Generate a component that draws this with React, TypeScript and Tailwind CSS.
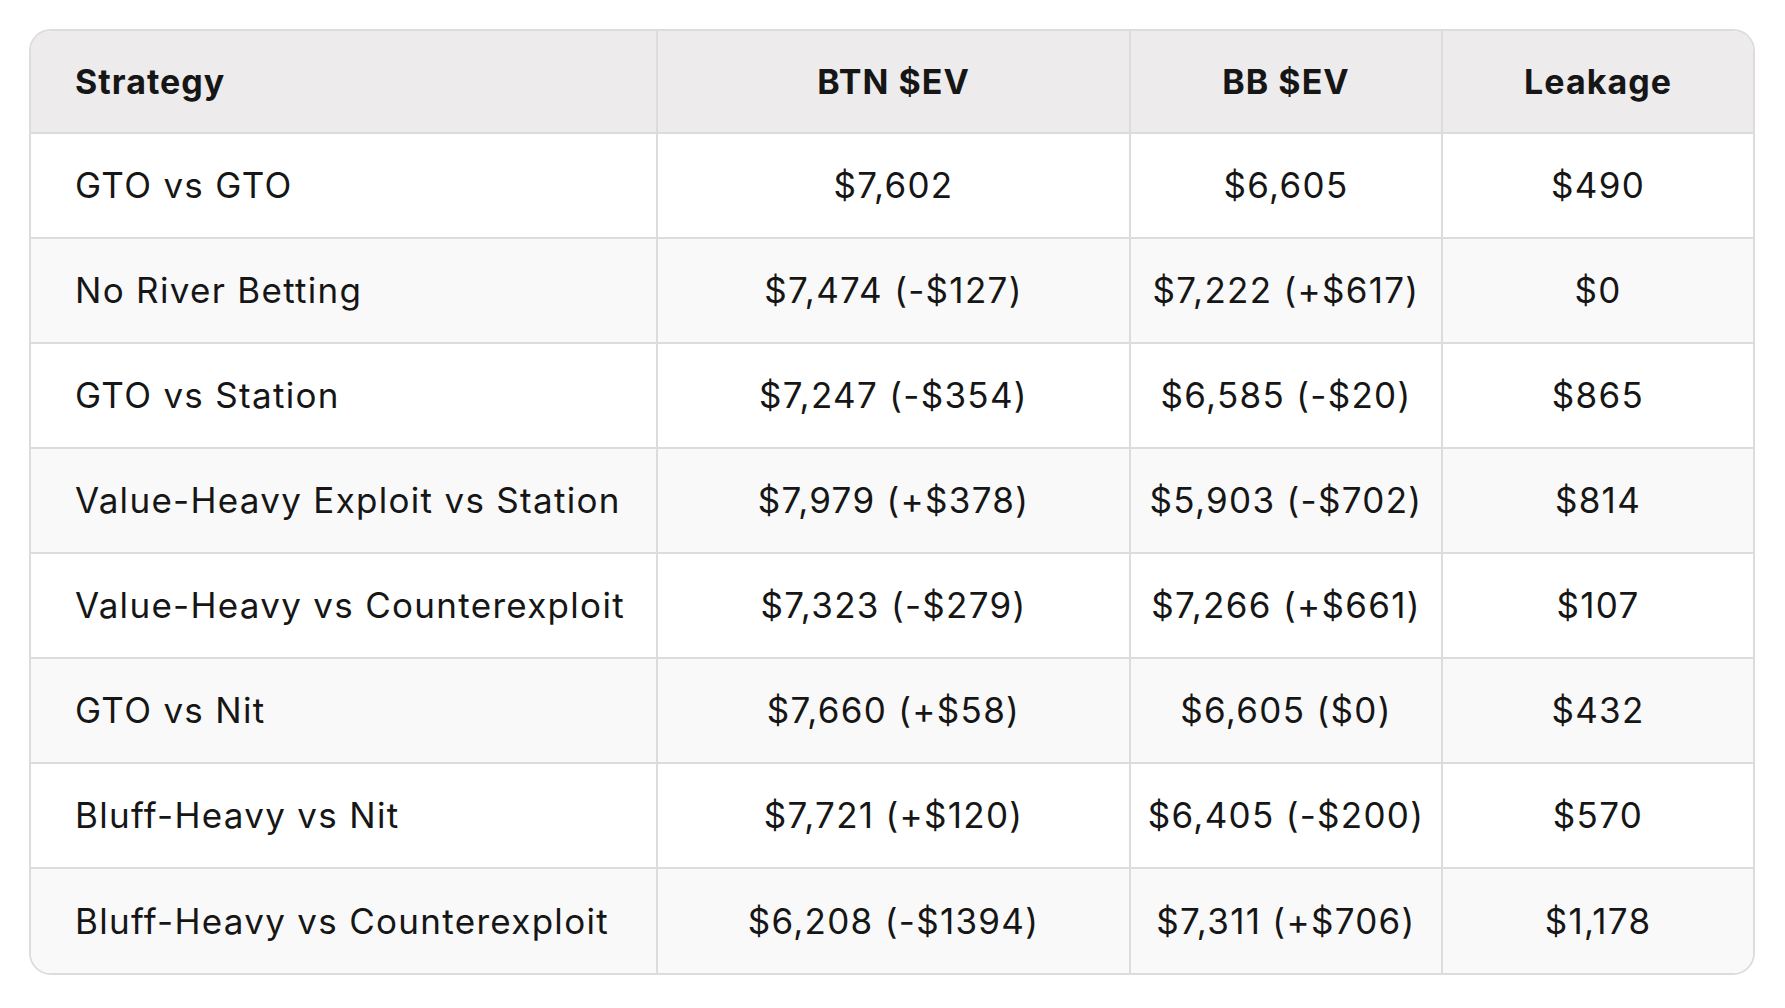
import React from "react";

const rows: [string, string, string, string][] = [
  ["GTO vs GTO", "$7,602", "$6,605", "$490"],
  ["No River Betting", "$7,474 (-$127)", "$7,222 (+$617)", "$0"],
  ["GTO vs Station", "$7,247 (-$354)", "$6,585 (-$20)", "$865"],
  ["Value-Heavy Exploit vs Station", "$7,979 (+$378)", "$5,903 (-$702)", "$814"],
  ["Value-Heavy vs Counterexploit", "$7,323 (-$279)", "$7,266 (+$661)", "$107"],
  ["GTO vs Nit", "$7,660 (+$58)", "$6,605 ($0)", "$432"],
  ["Bluff-Heavy vs Nit", "$7,721 (+$120)", "$6,405 (-$200)", "$570"],
  ["Bluff-Heavy vs Counterexploit", "$6,208 (-$1394)", "$7,311 (+$706)", "$1,178"],
];

export default function App() {
  return (
    <div
      className="min-h-screen w-full bg-white pt-[29px] pl-[29px]"
      style={{ fontFamily: "Inter, 'Open Sans', sans-serif" }}
    >
      <div className="w-[1726px] overflow-hidden rounded-[22px] border-2 border-[#dcdcdc] text-[#161616]">
        <div className="grid grid-cols-[627px_473px_312px_1fr] bg-[#edebec] text-[34px] font-bold tracking-[0.03em]">
          <div className="flex h-[103px] items-center border-r-2 border-b-2 border-[#dcdcdc] pl-[44px]">Strategy</div>
          <div className="flex h-[103px] items-center justify-center border-r-2 border-b-2 border-[#dcdcdc]">BTN $EV</div>
          <div className="flex h-[103px] items-center justify-center border-r-2 border-b-2 border-[#dcdcdc]">BB $EV</div>
          <div className="flex h-[103px] items-center justify-center border-b-2 border-[#dcdcdc]">Leakage</div>
        </div>
        {rows.map((r, i) => {
          const last = i === rows.length - 1;
          const bg = i % 2 === 0 ? "bg-white" : "bg-[#f9f9f9]";
          const cell = last ? "h-[104px]" : "h-[105px] border-b-2";
          return (
            <div key={i} className={`grid grid-cols-[627px_473px_312px_1fr] text-[35px] font-normal tracking-[0.037em] ${bg}`}>
              <div className={`flex items-center border-r-2 border-[#dcdcdc] pl-[44px] ${cell}`}>{r[0]}</div>
              <div className={`flex items-center justify-center border-r-2 border-[#dcdcdc] ${cell}`}>{r[1]}</div>
              <div className={`flex items-center justify-center border-r-2 border-[#dcdcdc] ${cell}`}>{r[2]}</div>
              <div className={`flex items-center justify-center border-[#dcdcdc] ${cell}`}>{r[3]}</div>
            </div>
          );
        })}
      </div>
    </div>
  );
}
